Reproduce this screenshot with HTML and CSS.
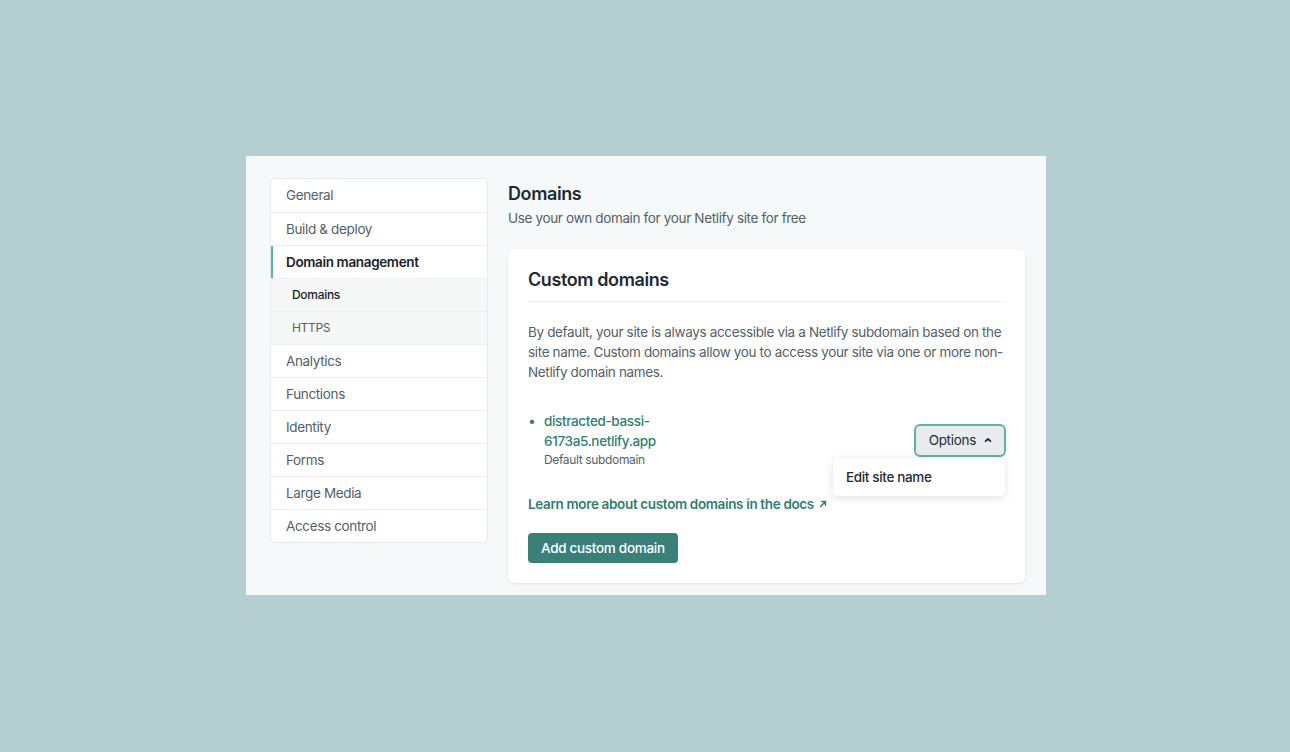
FILE: index.html
```html
<!DOCTYPE html>
<html>
<head>
<meta charset="utf-8">
<link rel="stylesheet" href="styles.css">
</head>
<body>
<div class="panel">
  <nav class="sidebar">
    <div class="nav-item">General</div>
    <div class="nav-item">Build &amp; deploy</div>
    <div class="nav-item active">Domain management</div>
    <div class="nav-sub current">Domains</div>
    <div class="nav-sub">HTTPS</div>
    <div class="nav-item">Analytics</div>
    <div class="nav-item">Functions</div>
    <div class="nav-item">Identity</div>
    <div class="nav-item">Forms</div>
    <div class="nav-item">Large Media</div>
    <div class="nav-item">Access control</div>
  </nav>
  <main class="main">
    <h1 class="page-title">Domains</h1>
    <p class="page-sub">Use your own domain for your Netlify site for free</p>
    <section class="card">
      <h2 class="card-title">Custom domains</h2>
      <p class="card-text">By default, your site is always accessible via a Netlify subdomain based on the site name. Custom domains allow you to access your site via one or more non-Netlify domain names.</p>
      <div class="domain-row">
        <div class="domain-info">
          <span class="bullet">•</span>
          <div>
            <div class="domain-name">distracted-bassi-6173a5.netlify.app</div>
            <div class="domain-label">Default subdomain</div>
          </div>
        </div>
        <div class="options">
          <button class="options-btn">Options
            <svg width="10" height="10" viewBox="0 0 10 10"><path d="M2.6 6.2 L5 3.9 L7.4 6.2" fill="none" stroke="#1f2a30" stroke-width="1.8" stroke-linecap="round" stroke-linejoin="round"/></svg>
          </button>
          <div class="menu"><div class="menu-item">Edit site name</div></div>
        </div>
      </div>
      <a class="docs-link">Learn more about custom domains in the docs <svg class="arrow" width="10" height="10" viewBox="0 0 10 10"><path d="M2.5 7.5 L7.5 2.5 M3.8 2.5 H7.5 V6.2" fill="none" stroke="#2f7e72" stroke-width="1.5" stroke-linecap="round" stroke-linejoin="round"/></svg></a>
      <button class="primary-btn">Add custom domain</button>
    </section>
  </main>
</div>
</body>
</html>
```

FILE: styles.css
```css
* { box-sizing: border-box; }
html, body { margin: 0; }
body {
  background: #b4ced1;
  font-family: Inter, "Noto Sans", "Liberation Sans", sans-serif;
  color: #1f2b31;
  width: 1290px;
  height: 752px;
  padding: 156px 0 0 246px;
  letter-spacing: -0.35px;
}
.panel {
  width: 800px;
  height: 439px;
  background: #f6f9fa;
  display: flex;
  gap: 20px;
  padding: 22px 21px 12px 24px;
  align-items: flex-start;
}
.sidebar {
  width: 218px;
  flex: none;
  background: #fff;
  border: 1px solid #e7eaec;
  border-radius: 5px;
  overflow: hidden;
}
.nav-item, .nav-sub {
  height: 33px;
  display: flex;
  align-items: center;
  padding-left: 15px;
  padding-bottom: 1px;
  font-size: 13.5px;
  color: #545f66;
  border-top: 1px solid #eceff0;
}
.nav-item:first-child { border-top: none; }
.nav-item.active {
  font-weight: 600;
  color: #1a2328;
  box-shadow: inset 2px 0 0 #5ab3a5;
}
.nav-sub {
  background: #f6f7f7;
  padding-left: 21px;
  font-size: 12px;
  letter-spacing: -0.3px;
  color: #545f66;
}
.nav-sub.current { color: #1a2328; font-weight: 500; }
.main { flex: 1; display: flex; flex-direction: column; }
.page-title {
  margin: 5px 0 0;
  font-size: 18px;
  font-weight: 600;
  line-height: 22px;
  letter-spacing: -0.4px;
  color: #1f2b31;
}
.page-sub {
  margin: 4px 0 0;
  font-size: 13.5px;
  line-height: 18px;
  color: #545f66;
}
.card {
  margin-top: 22px;
  background: #fff;
  border-radius: 6px;
  box-shadow: 0 1px 3px rgba(20, 40, 50, 0.10);
  padding: 20px;
  display: flex;
  flex-direction: column;
}
.card-title {
  margin: 0;
  font-size: 18px;
  font-weight: 600;
  line-height: 22px;
  letter-spacing: -0.4px;
  padding-bottom: 10px;
  border-bottom: 1px solid #eef0f1;
  color: #1f2b31;
}
.card-text {
  margin: 20px 0 0;
  font-size: 13.5px;
  line-height: 20px;
  color: #545f66;
}
.domain-row {
  margin-top: 29px;
  display: flex;
  justify-content: space-between;
  align-items: center;
}
.domain-info { display: flex; gap: 10px; }
.bullet { color: #2f7e72; font-size: 14px; line-height: 20px; width: 6px; }
.domain-name {
  width: 130px;
  font-size: 13.5px;
  line-height: 20px;
  color: #2f7e72;
  font-weight: 500;
}
.domain-label { font-size: 12px; line-height: 18px; color: #545f66; letter-spacing: -0.35px; }
.options { position: relative; margin-right: -1px; }
.options-btn {
  font-family: inherit;
  letter-spacing: -0.3px;
  font-size: 13.5px;
  color: #1f2b31;
  background: #e9ecee;
  border: 2px solid #5db3a5;
  border-radius: 6px;
  height: 33px;
  padding: 0 11px 0 13px;
  display: flex;
  align-items: center;
  gap: 7px;
}
.menu {
  position: absolute;
  right: 1px;
  top: 34px;
  width: 172px;
  background: #fff;
  border-radius: 5px;
  box-shadow: 0 2px 8px rgba(20, 40, 50, 0.14);
  padding: 10px 13px 9px;
  z-index: 2;
}
.menu-item { font-size: 13.5px; line-height: 19px; color: #1f2b31; font-weight: 500; }
.docs-link {
  margin-top: 26px;
  font-size: 13.5px;
  line-height: 18px;
  font-weight: 600;
  color: #2f7e72;
}
.arrow { vertical-align: 0; margin-left: 1px; }
.primary-btn {
  margin-top: 20px;
  flex: none;
  align-self: flex-start;
  font-family: inherit;
  letter-spacing: -0.3px;
  font-size: 13.5px;
  font-weight: 500;
  color: #fff;
  background: #3b8078;
  border: none;
  border-radius: 4px;
  height: 30px;
  padding: 0 13px;
}
```
